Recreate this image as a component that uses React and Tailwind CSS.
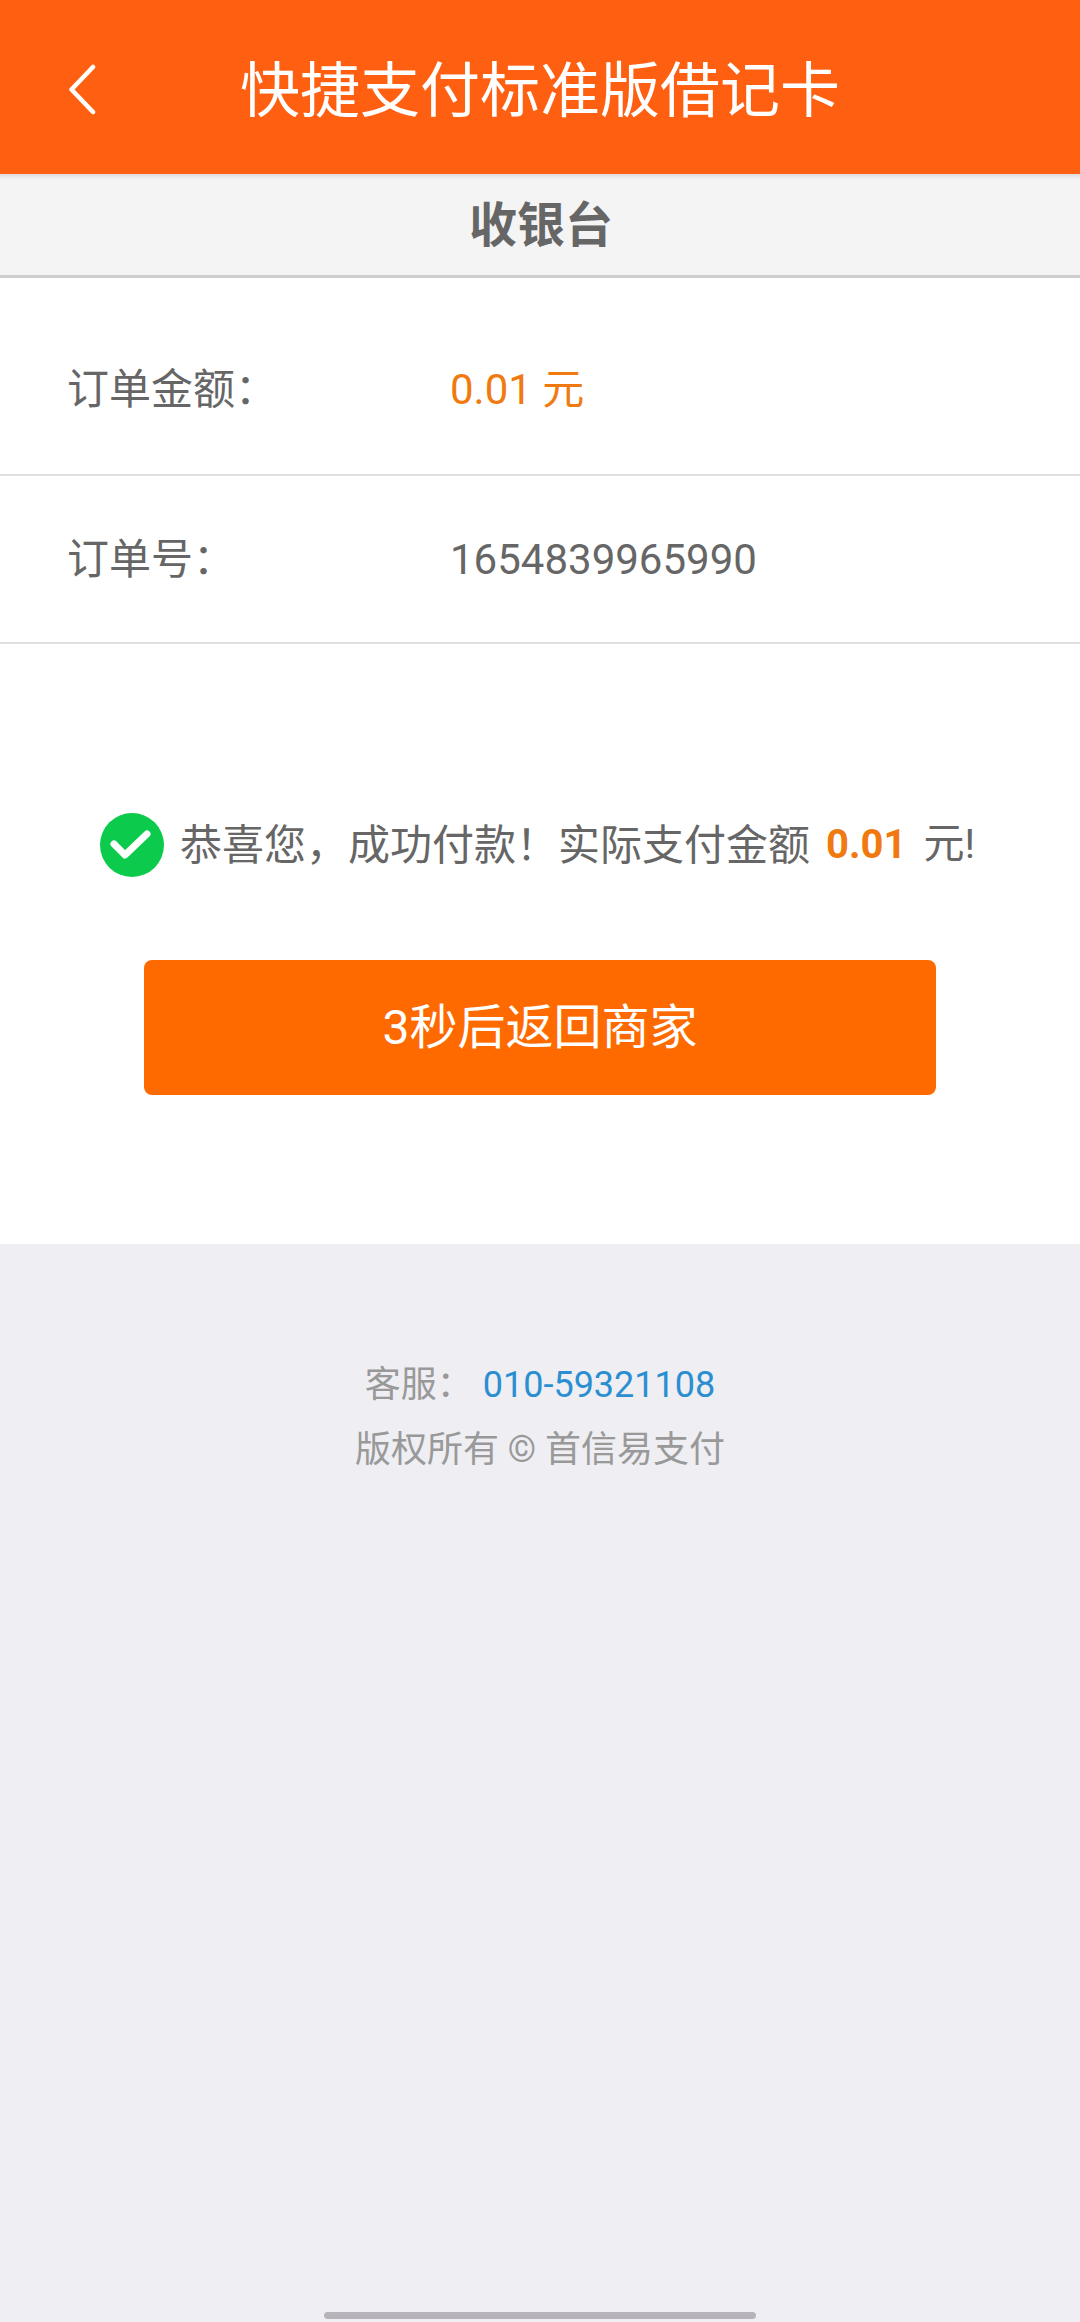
import React from 'react';

const font = "font-['Roboto','Noto_Sans_CJK_SC',sans-serif]";

const InfoRow = ({ label, children, height }) => (
    <div className={`flex items-center pl-[67px] border-b-2 border-[#e0e0e2] text-[42px] ${height}`}>
        <span className="w-[383px] text-[#666666]">{label}</span>
        {children}
    </div>
);

const App = () => {
    return (
        <div className={`${font} flex flex-col w-[1080px] h-[2322px] overflow-hidden bg-[#eeeef3]`}>
            <header className="relative flex items-center justify-center h-[174px] bg-[#ff5f10]">
                <svg className="absolute left-[66px] top-[63px] w-[32px] h-[52px]" viewBox="0 0 32 52" fill="none">
                    <path d="M27 4 L5.5 26.5 L27 49" stroke="#ffffff" strokeWidth="4.5" strokeLinecap="round" strokeLinejoin="round" />
                </svg>
                <h1 className="text-[60px] leading-none text-white pt-[10px]">快捷支付标准版借记卡</h1>
            </header>

            <div className="flex items-center justify-center h-[104px] pl-[2px] pt-[2px] bg-[#f4f4f4] border-b-[3px] border-[#cdcdcd] shadow-[inset_0_5px_4px_-3px_rgba(0,0,0,0.12)] text-[48px] font-bold text-[#666666]">
                收银台
            </div>

            <div className="flex flex-col bg-white h-[966px]">
                <InfoRow label="订单金额：" height="h-[198px] pt-[26px]">
                    <span className="text-[#f07a10]">0.01 元</span>
                </InfoRow>
                <InfoRow label="订单号：" height="h-[168px]">
                    <span className="text-[#666666]">1654839965990</span>
                </InfoRow>

                <div className="flex items-center pl-[100px] mt-[169px] h-[64px] text-[42px] text-[#666666]">
                    <svg className="w-[64px] h-[64px] shrink-0 mr-[16px]" viewBox="0 0 64 64">
                        <circle cx="32" cy="32" r="32" fill="#0ccb4c" />
                        <path d="M14 31 L25 42 L47 21" fill="none" stroke="#ffffff" strokeWidth="7" strokeLinecap="round" strokeLinejoin="round" />
                    </svg>
                    <span>恭喜您，成功付款！实际支付金额</span>
                    <span className="font-bold text-[40px] text-[#f07a10] ml-[16px]">0.01</span>
                    <span className="ml-[17px] text-[41px]">元!</span>
                </div>

                <button className="flex items-center justify-center self-center w-[792px] h-[135px] mt-[83px] rounded-[8px] bg-[#ff6a00] text-[48px] text-white">
                    3秒后返回商家
                </button>
            </div>

            <footer className="flex flex-col items-center mt-[109px] text-[36px] leading-[65px] text-[#999999]">
                <p>
                    客服：
                    <span className="text-[#2a8fd0] ml-[10px]">010-59321108</span>
                </p>
                <p>版权所有 © 首信易支付</p>
            </footer>

            <div className="mt-auto mb-[3px] self-center w-[432px] h-[7px] rounded-full bg-[#b6b4ba]" />
        </div>
    );
};

export default App;
